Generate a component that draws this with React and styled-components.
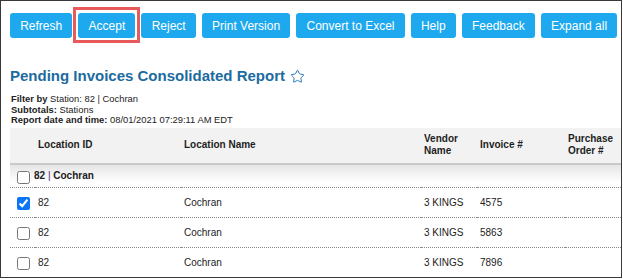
import React from 'react';
import styled, { createGlobalStyle } from 'styled-components';
import { Star } from 'lucide-react';

const GlobalStyle = createGlobalStyle`
  html, body {
    margin: 0;
    padding: 0;
    background: #fff;
  }
  body {
    font-family: 'Liberation Sans', Arial, sans-serif;
  }
`;

const Frame = styled.div`
  box-sizing: border-box;
  width: 622px;
  height: 278px;
  border: 1px solid #3a3a3a;
  overflow: hidden;
  background: #fff;
`;

const Toolbar = styled.div`
  display: flex;
  gap: 6px;
  padding: 12px 0 0 9px;
`;

const ToolButton = styled.button`
  position: relative;
  height: 25px;
  padding: 0 10.2px;
  border: none;
  border-radius: 3px;
  background: #1ea9ef;
  color: #fff;
  font-family: 'Liberation Sans', Arial, sans-serif;
  font-size: 12px;
  white-space: nowrap;
  cursor: pointer;

  &::after {
    content: '';
    display: ${({ $highlight }) => ($highlight ? 'block' : 'none')};
    position: absolute;
    top: -6px;
    bottom: -5px;
    left: -5px;
    right: -5px;
    border: 3px solid #e8595c;
  }
`;

const Title = styled.h1`
  display: flex;
  align-items: center;
  gap: 5px;
  margin: 29px 0 0 9px;
  font-size: 15px;
  font-weight: bold;
  color: #1b6b9f;
  line-height: 18px;
`;

const Meta = styled.div`
  margin: 9px 0 0 10px;
  font-size: 9.4px;
  line-height: 10.5px;
  color: #222;

  b {
    font-weight: bold;
  }
`;

const Table = styled.table`
  margin: 2px 0 0 9px;
  border-collapse: collapse;
  table-layout: fixed;
  width: 680px;
  font-size: 10px;
  color: #222;
`;

const HeadRow = styled.tr`
  background: #f2f2f2;
  border-bottom: 2px solid #c9c9c9;
`;

const Th = styled.th`
  height: 35px;
  padding: 0 4px 0 3px;
  text-align: left;
  font-weight: bold;
  line-height: 12.5px;
  color: #1e1e1e;
`;

const GroupRow = styled.tr`
  background: linear-gradient(#e4e4e4, #fff 80%);
  border-bottom: 1px dotted #888;
`;

const GroupCell = styled.td`
  height: 22px;
  padding: 0 0 0 3px;
`;

const GroupText = styled.span`
  font-weight: bold;
  font-size: 10px;
  white-space: pre;
`;

const Bar = styled.span`
  color: #4b1f7a;
  font-weight: normal;
`;

const DataRow = styled.tr`
  border-bottom: ${({ $last }) => ($last ? 'none' : '1px dotted #888')};
`;

const Td = styled.td`
  height: 29px;
  padding: 0 4px 0 3px;
  font-size: 10px;
  color: #222;
  white-space: nowrap;
`;

const CheckCell = styled.td`
  padding: 0 0 0 3px;
`;

const Check = styled.input`
  width: 13px;
  height: 13px;
  margin: 3px 3px 0 4px;
  vertical-align: middle;
  accent-color: #0a75f5;
`;

const GroupLabel = styled.label`
  display: flex;
  align-items: center;
  gap: 1px;
`;

const rows = [
  { id: '82', name: 'Cochran', vendor: '3 KINGS', invoice: '4575', checked: true },
  { id: '82', name: 'Cochran', vendor: '3 KINGS', invoice: '5863', checked: false },
  { id: '82', name: 'Cochran', vendor: '3 KINGS', invoice: '7896', checked: false },
];

const buttons = ['Refresh', 'Accept', 'Reject', 'Print Version', 'Convert to Excel', 'Help', 'Feedback', 'Expand all'];

export default function App() {
  return (
    <>
      <GlobalStyle />
      <Frame>
        <Toolbar>
          {buttons.map((b) => (
            <ToolButton key={b} $highlight={b === 'Accept'}>{b}</ToolButton>
          ))}
        </Toolbar>

        <Title>
          Pending Invoices Consolidated Report
          <Star size={15} strokeWidth={1.6} color="#2a79b8" />
        </Title>

        <Meta>
          <div><b>Filter by</b> Station: 82 | Cochran</div>
          <div><b>Subtotals:</b> Stations</div>
          <div><b>Report date and time:</b> 08/01/2021 07:29:11 AM EDT</div>
        </Meta>

        <Table>
          <colgroup>
            <col style={{ width: 25 }} />
            <col style={{ width: 146 }} />
            <col style={{ width: 240 }} />
            <col style={{ width: 56 }} />
            <col style={{ width: 88 }} />
            <col style={{ width: 56 }} />
            <col style={{ width: 69 }} />
          </colgroup>
          <thead>
            <HeadRow>
              <Th />
              <Th>Location ID</Th>
              <Th>Location Name</Th>
              <Th>Vendor<br />Name</Th>
              <Th>Invoice #</Th>
              <Th>Purchase<br />Order #</Th>
              <Th />
            </HeadRow>
          </thead>
          <tbody>
            <GroupRow>
              <GroupCell colSpan={7}>
                <GroupLabel>
                  <Check type="checkbox" readOnly />
                  <GroupText>82 <Bar>|</Bar> Cochran</GroupText>
                </GroupLabel>
              </GroupCell>
            </GroupRow>
            {rows.map((r, i) => (
              <DataRow key={r.invoice} $last={i === rows.length - 1}>
                <CheckCell>
                  <Check type="checkbox" readOnly checked={r.checked} />
                </CheckCell>
                <Td>{r.id}</Td>
                <Td>{r.name}</Td>
                <Td>{r.vendor}</Td>
                <Td>{r.invoice}</Td>
                <Td />
                <Td />
              </DataRow>
            ))}
          </tbody>
        </Table>
      </Frame>
    </>
  );
}
